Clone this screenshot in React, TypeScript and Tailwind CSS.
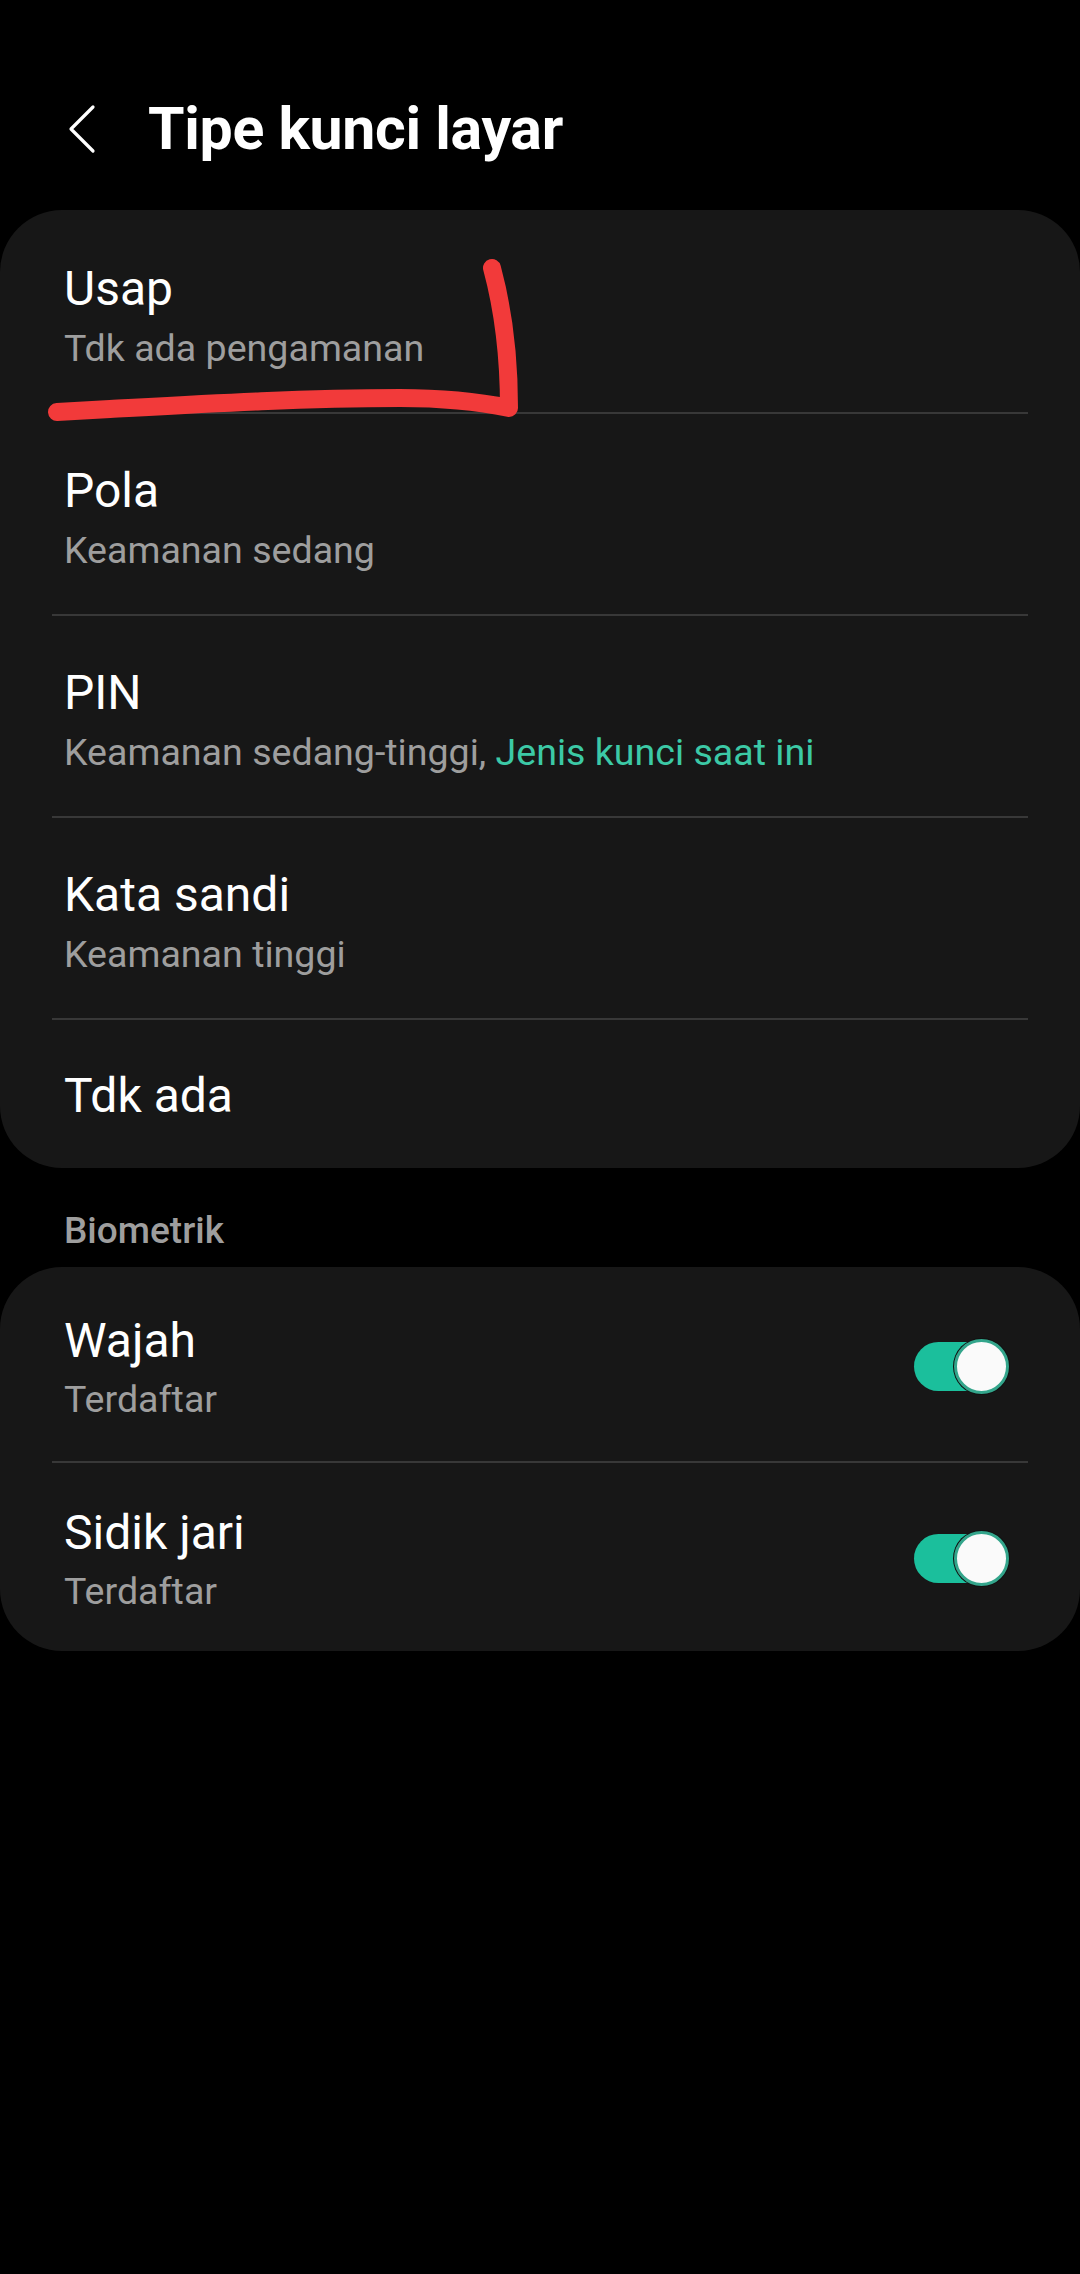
import React from "react";

type Item = { title: string; sub?: React.ReactNode };

const lockItems: Item[] = [
  { title: "Usap", sub: "Tdk ada pengamanan" },
  { title: "Pola", sub: "Keamanan sedang" },
  {
    title: "PIN",
    sub: (
      <>
        Keamanan sedang-tinggi, <span className="text-[#3cc9a6]">Jenis kunci saat ini</span>
      </>
    ),
  },
  { title: "Kata sandi", sub: "Keamanan tinggi" },
];

function Divider() {
  return <div className="mx-[52px] h-[2px] bg-[#383838]" />;
}

function Toggle() {
  return (
    <div className="relative mb-[6px] h-[56px] w-[96px] shrink-0">
      <div className="absolute left-0 top-[4px] h-[49px] w-[88px] rounded-full bg-[#1bbf9c]" />
      <div className="absolute right-0 top-0 h-[57px] w-[57px] rounded-full bg-[#101010] p-[1px]">
        <div className="h-full w-full rounded-full border-[3px] border-[#33a58b] bg-[#fafafa]" />
      </div>
    </div>
  );
}

export default function App() {
  return (
    <div
      className="relative min-h-[2274px] w-[1080px] bg-black text-white"
      style={{ fontFamily: "Roboto, 'Noto Sans', sans-serif" }}
    >
      {/* Header */}
      <div className="flex items-center pt-[93px]">
        <div className="flex w-[148px] justify-start pl-[68px]">
          <svg width="28" height="50" viewBox="0 0 28 50" fill="none">
            <path d="M25 3 L3 25 L25 47" stroke="#ffffff" strokeWidth="3.2" strokeLinecap="round" strokeLinejoin="round" />
          </svg>
        </div>
        <h1 className="text-[59px] font-bold leading-[72px] tracking-[-0.3px]">Tipe kunci layar</h1>
      </div>

      {/* Lock type card */}
      <div className="mt-[45px] rounded-[62px] bg-[#171717] pt-[2px]">
        {lockItems.map((it) => (
          <React.Fragment key={it.title}>
            <div className="pb-[39px] pl-[64px] pr-[64px] pt-[49px]">
              <div className="text-[48px] leading-[56px]">{it.title}</div>
              <div className="mt-[6px] text-[37.6px] leading-[50px] text-[#9e9e9e]">{it.sub}</div>
            </div>
            <Divider />
          </React.Fragment>
        ))}
        <div className="pb-[44px] pl-[64px] pt-[48px]">
          <div className="text-[48px] leading-[56px]">Tdk ada</div>
        </div>
      </div>

      {/* Biometrik section */}
      <div className="pb-[14px] pl-[64px] pt-[41px] text-[37px] font-medium leading-[44px] text-[#9e9e9e]">
        Biometrik
      </div>

      <div className="rounded-[62px] bg-[#171717] pt-[4px]">
        <div className="flex items-center pb-[37px] pl-[64px] pr-[70px] pt-[42px]">
          <div className="flex-1">
            <div className="text-[48px] leading-[56px]">Wajah</div>
            <div className="mt-[5px] text-[37.6px] leading-[50px] text-[#9e9e9e]">Terdaftar</div>
          </div>
          <Toggle />
        </div>
        <Divider />
        <div className="flex items-center pb-[35px] pl-[64px] pr-[70px] pt-[42px]">
          <div className="flex-1">
            <div className="text-[48px] leading-[56px]">Sidik jari</div>
            <div className="mt-[5px] text-[37.6px] leading-[50px] text-[#9e9e9e]">Terdaftar</div>
          </div>
          <Toggle />
        </div>
      </div>

      {/* Red hand-drawn annotation */}
      <svg
        className="pointer-events-none absolute left-0 top-0"
        width="1080"
        height="600"
        viewBox="0 0 1080 600"
        fill="none"
      >
        <path
          d="M492 268 C502 305, 509 355, 509 408 C485 403, 445 398, 400 398 C300 398, 200 404, 110 409 L57 412"
          stroke="#f23a3a"
          strokeWidth="18"
          strokeLinecap="round"
          strokeLinejoin="round"
        />
      </svg>
    </div>
  );
}
